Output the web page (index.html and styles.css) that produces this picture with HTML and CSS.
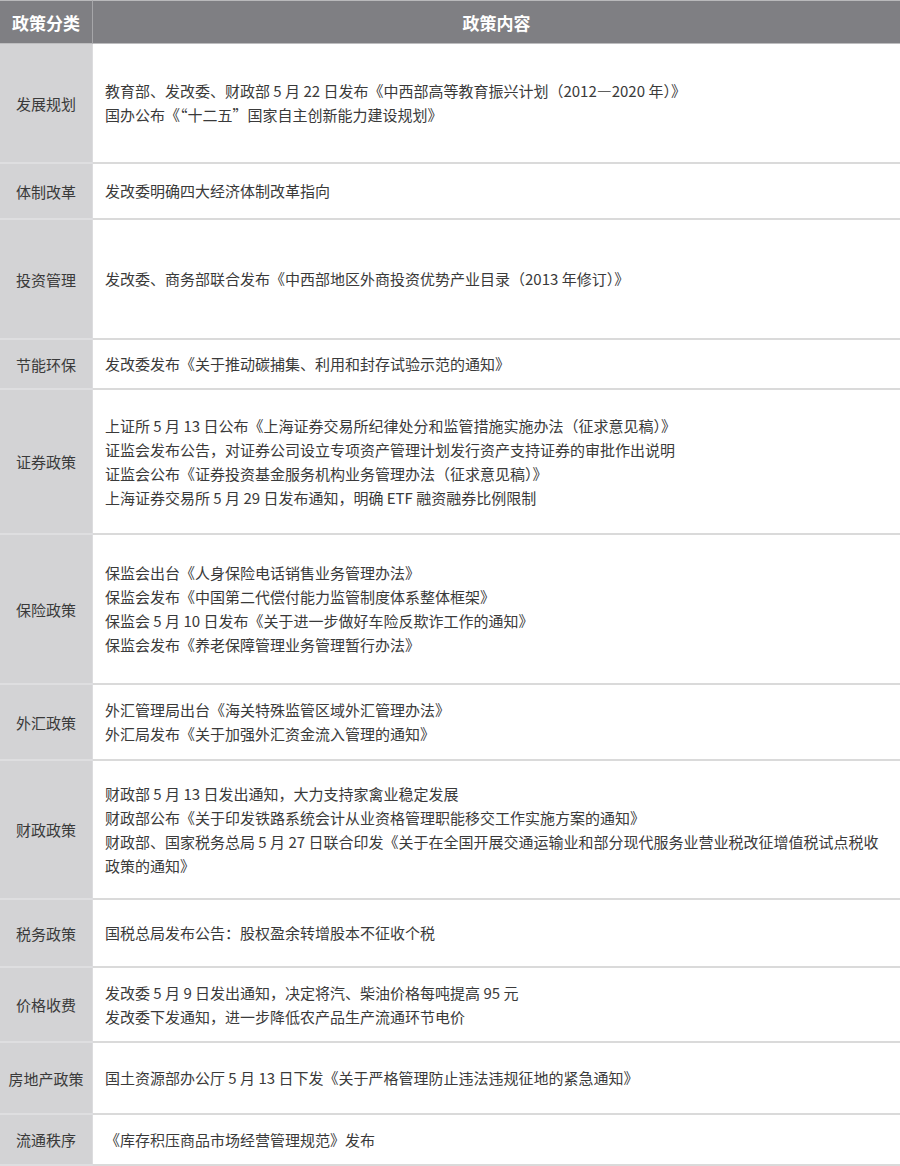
FILE: index.html
```html
<!DOCTYPE html>
<html lang="zh-CN">
<head>
  <meta charset="UTF-8" />
  <meta name="viewport" content="width=device-width, initial-scale=1.0"/>
  <title>政策分类</title>
  <link rel="stylesheet" href="styles.css">
</head>
<body>
  <div class="policy-table">
    <div class="head head-label">政策分类</div>
    <div class="head head-content">政策内容</div>

    <div class="label">发展规划</div>
    <div class="content">
      <p>教育部、发改委、财政部 5 月 22 日发布《中西部高等教育振兴计划（2012—2020 年）》</p>
      <p>国办公布《“十二五”国家自主创新能力建设规划》</p>
    </div>

    <div class="label">体制改革</div>
    <div class="content">
      <p>发改委明确四大经济体制改革指向</p>
    </div>

    <div class="label">投资管理</div>
    <div class="content">
      <p>发改委、商务部联合发布《中西部地区外商投资优势产业目录（2013 年修订）》</p>
    </div>

    <div class="label">节能环保</div>
    <div class="content">
      <p>发改委发布《关于推动碳捕集、利用和封存试验示范的通知》</p>
    </div>

    <div class="label">证券政策</div>
    <div class="content">
      <p>上证所 5 月 13 日公布《上海证券交易所纪律处分和监管措施实施办法（征求意见稿）》</p>
      <p>证监会发布公告，对证券公司设立专项资产管理计划发行资产支持证券的审批作出说明</p>
      <p>证监会公布《证券投资基金服务机构业务管理办法（征求意见稿）》</p>
      <p>上海证券交易所 5 月 29 日发布通知，明确 ETF 融资融券比例限制</p>
    </div>

    <div class="label">保险政策</div>
    <div class="content">
      <p>保监会出台《人身保险电话销售业务管理办法》</p>
      <p>保监会发布《中国第二代偿付能力监管制度体系整体框架》</p>
      <p>保监会 5 月 10 日发布《关于进一步做好车险反欺诈工作的通知》</p>
      <p>保监会发布《养老保障管理业务管理暂行办法》</p>
    </div>

    <div class="label">外汇政策</div>
    <div class="content">
      <p>外汇管理局出台《海关特殊监管区域外汇管理办法》</p>
      <p>外汇局发布《关于加强外汇资金流入管理的通知》</p>
    </div>

    <div class="label">财政政策</div>
    <div class="content">
      <p>财政部 5 月 13 日发出通知，大力支持家禽业稳定发展</p>
      <p>财政部公布《关于印发铁路系统会计从业资格管理职能移交工作实施方案的通知》</p>
      <p>财政部、国家税务总局 5 月 27 日联合印发《关于在全国开展交通运输业和部分现代服务业营业税改征增值税试点税收<br>政策的通知》</p>
    </div>

    <div class="label">税务政策</div>
    <div class="content">
      <p>国税总局发布公告：股权盈余转增股本不征收个税</p>
    </div>

    <div class="label">价格收费</div>
    <div class="content">
      <p>发改委 5 月 9 日发出通知，决定将汽、柴油价格每吨提高 95 元</p>
      <p>发改委下发通知，进一步降低农产品生产流通环节电价</p>
    </div>

    <div class="label">房地产政策</div>
    <div class="content">
      <p>国土资源部办公厅 5 月 13 日下发《关于严格管理防止违法违规征地的紧急通知》</p>
    </div>

    <div class="label">流通秩序</div>
    <div class="content">
      <p>《库存积压商品市场经营管理规范》发布</p>
    </div>
  </div>
</body>
</html>
```

FILE: styles.css
```css
* {
  margin: 0;
  padding: 0;
  box-sizing: border-box;
}

body {
  background: #fff;
  font-family: "Noto Sans CJK SC", "Noto Sans", sans-serif;
  color: #3a3a3a;
}

.policy-table {
  display: grid;
  grid-template-columns: 93px 1fr;
  grid-template-rows: 44px 120px 56px 120px 50px 145px 150px 76px 139px 68px 75px 72px 51px;
  width: 900px;
}

.head {
  display: flex;
  align-items: center;
  justify-content: center;
  background: #7f7f83;
  color: #fff;
  font-size: 17px;
  font-weight: bold;
  border-top: 1px solid #b9b9bb;
  border-bottom: 1px solid #bdbdbf;
}

.head-label {
  border-right: 1px solid #a6a6a9;
}

.label {
  display: flex;
  align-items: center;
  justify-content: center;
  background: #d3d3d5;
  font-size: 15px;
  white-space: nowrap;
  border-right: 1px solid #dcdcde;
  border-bottom: 2px solid #dedee0;
}

.content {
  display: flex;
  flex-direction: column;
  justify-content: center;
  padding-left: 12px;
  font-size: 15px;
  line-height: 24px;
  border-bottom: 2px solid #dadada;
}
```
